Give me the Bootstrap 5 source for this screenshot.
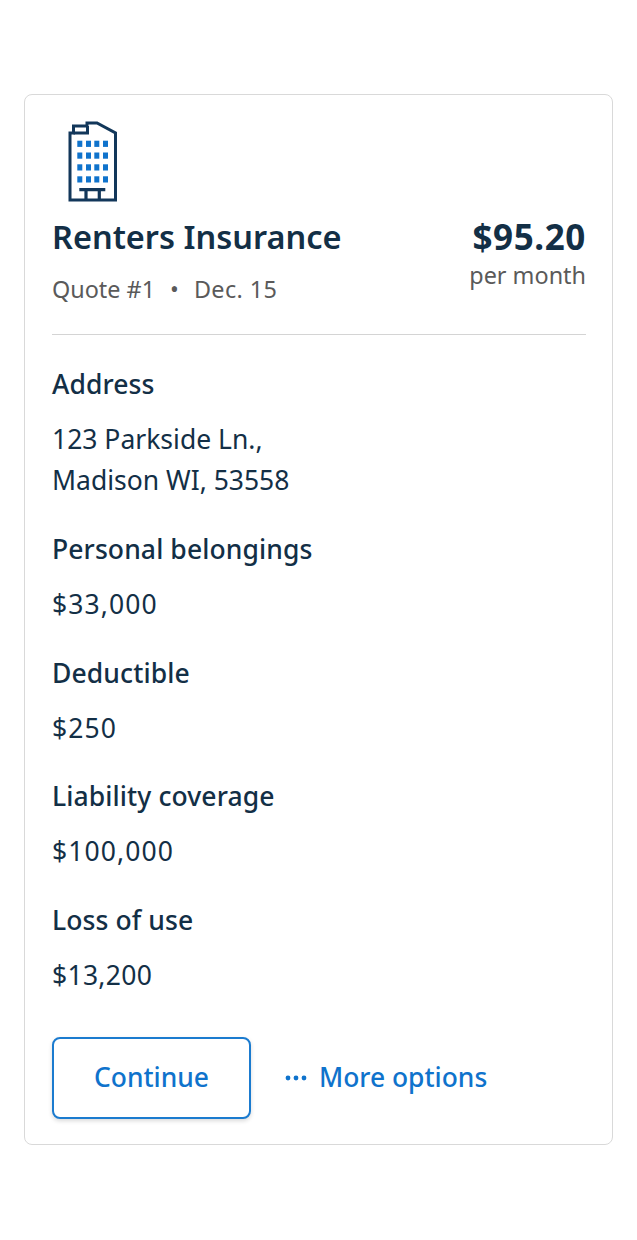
<!DOCTYPE html>
<html lang="en">
<head>
    <meta charset="UTF-8">
    <meta name="viewport" content="width=device-width, initial-scale=1.0">
    <title>Renters Insurance Quote</title>
    <link href="https://cdn.jsdelivr.net/npm/bootstrap@5.3.0/dist/css/bootstrap.min.css" rel="stylesheet">
    <style>
        body {
            font-family: "Noto Sans", "Open Sans", sans-serif;
            color: #132f46;
            background: #fff;
        }
        .page-wrap {
            padding: 94px 24px 0 24px;
        }
        .quote-card {
            border: 1px solid #d9d9d9;
            border-radius: 8px;
            height: 1051px;
            padding: 25px 26px 26px 27px;
        }
        .quote-icon {
            display: block;
            margin-left: 16px;
        }
        .quote-head {
            margin-top: 15px;
        }
        .quote-title {
            font-size: 32.5px;
            line-height: 40px;
            font-weight: 600;
            margin: 0;
        }
        .quote-price {
            font-size: 35px;
            line-height: 40px;
            font-weight: 700;
            letter-spacing: .6px;
        }
        .quote-muted {
            font-size: 23.4px;
            line-height: 32px;
            color: #5a5a5a;
        }
        .quote-sub {
            margin-top: 16px;
        }
        .quote-per {
            margin-top: 2px;
        }
        .quote-dot {
            margin: 0 15px;
        }
        .quote-date {
            letter-spacing: .4px;
        }
        .quote-rule {
            border-top: 1px solid #d4d4d4;
            opacity: 1;
            margin: 29px 0 33px;
        }
        .field-label {
            font-size: 26.5px;
            line-height: 32px;
            font-weight: 500;
            letter-spacing: .1px;
            margin: 0 0 19px;
        }
        .field-value {
            font-size: 26.5px;
            line-height: 41px;
            margin: 0 0 31.75px;
        }
        .field-num {
            letter-spacing: 1.1px;
        }
        .field-num-tight {
            letter-spacing: .3px;
        }
        .quote-actions {
            margin-top: 41px;
        }
        .btn-continue {
            width: 199px;
            height: 82px;
            font-size: 26.4px;
            font-weight: 500;
            color: #0f73cc;
            border: 2px solid #1b7bcf;
            border-radius: 8px;
            box-shadow: 0 2px 4px rgba(0, 0, 0, .15);
        }
        .more-link {
            font-size: 26.4px;
            font-weight: 500;
            color: #0f73cc;
            text-decoration: none;
            margin-left: 34px;
            gap: 12px;
        }
    </style>
</head>
<body>
    <div class="page-wrap">
        <div class="quote-card">
            <svg class="quote-icon" width="50" height="82" viewBox="0 0 50 82">
                <path d="M2 80V13H5.5V6H19V3H29L47.5 13V80Z" fill="#fff" stroke="#12375a" stroke-width="3"/>
                <path d="M5.5 13H19.5V6" fill="none" stroke="#12375a" stroke-width="3"/>
                <g fill="#0f73cc">
                    <rect x="9.3" y="20.7" width="5" height="6.2"/><rect x="18" y="20.7" width="5" height="6.2"/><rect x="26.3" y="20.7" width="5" height="6.2"/><rect x="35" y="20.7" width="5" height="6.2"/>
                    <rect x="9.3" y="32.5" width="5" height="6.2"/><rect x="18" y="32.5" width="5" height="6.2"/><rect x="26.3" y="32.5" width="5" height="6.2"/><rect x="35" y="32.5" width="5" height="6.2"/>
                    <rect x="9.3" y="44.3" width="5" height="6.2"/><rect x="18" y="44.3" width="5" height="6.2"/><rect x="26.3" y="44.3" width="5" height="6.2"/><rect x="35" y="44.3" width="5" height="6.2"/>
                    <rect x="9.3" y="56.3" width="5" height="6.2"/><rect x="18" y="56.3" width="5" height="6.2"/><rect x="26.3" y="56.3" width="5" height="6.2"/><rect x="35" y="56.3" width="5" height="6.2"/>
                </g>
                <path d="M11.3 69.7H37.3M18 70V80M31.3 70V80" fill="none" stroke="#12375a" stroke-width="3.2"/>
            </svg>

            <div class="quote-head d-flex justify-content-between align-items-start">
                <div>
                    <h1 class="quote-title">Renters Insurance</h1>
                    <div class="quote-muted quote-sub">Quote #1<span class="quote-dot">•</span><span class="quote-date">Dec. 15</span></div>
                </div>
                <div class="text-end">
                    <div class="quote-price">$95.20</div>
                    <div class="quote-muted quote-per">per month</div>
                </div>
            </div>

            <hr class="quote-rule">

            <p class="field-label">Address</p>
            <p class="field-value">123 Parkside Ln.,<br>Madison WI, 53558</p>
            <p class="field-label">Personal belongings</p>
            <p class="field-value field-num">$33,000</p>
            <p class="field-label">Deductible</p>
            <p class="field-value field-num">$250</p>
            <p class="field-label">Liability coverage</p>
            <p class="field-value field-num">$100,000</p>
            <p class="field-label">Loss of use</p>
            <p class="field-value field-num-tight">$13,200</p>

            <div class="quote-actions d-flex align-items-center">
                <button type="button" class="btn btn-continue bg-white">Continue</button>
                <a href="#" class="more-link d-flex align-items-center">
                    <svg width="22" height="6" viewBox="0 0 22 6"><circle cx="3" cy="3" r="2.4" fill="#0f73cc"/><circle cx="11" cy="3" r="2.4" fill="#0f73cc"/><circle cx="19" cy="3" r="2.4" fill="#0f73cc"/></svg>
                    More options
                </a>
            </div>
        </div>
    </div>
    <script src="https://cdn.jsdelivr.net/npm/bootstrap@5.3.0/dist/js/bootstrap.bundle.min.js"></script>
</body>
</html>
